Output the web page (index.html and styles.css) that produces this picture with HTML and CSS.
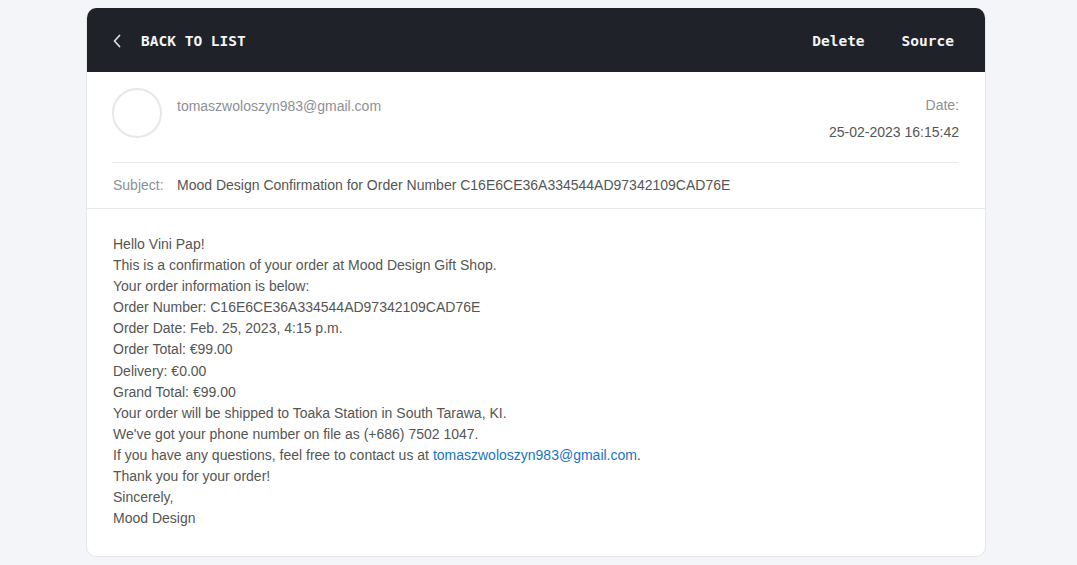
FILE: index.html
```html
<!DOCTYPE html>
<html>
<head>
<meta charset="utf-8">
<link rel="stylesheet" href="styles.css">
</head>
<body>
<div class="card">
  <div class="topbar">
    <a class="back">
      <svg class="chev" width="8" height="14" viewBox="0 0 8 14"><path d="M6.5 1.5 L1.5 7 L6.5 12.5" fill="none" stroke="#d8dade" stroke-width="1.8" stroke-linecap="round" stroke-linejoin="round"/></svg>
      <span>BACK TO LIST</span>
    </a>
    <div class="actions">
      <span>Delete</span>
      <span>Source</span>
    </div>
  </div>
  <div class="meta">
    <div class="from-row">
      <div class="avatar"></div>
      <div class="sender">tomaszwoloszyn983@gmail.com</div>
      <div class="date">
        <div class="date-label">Date:</div>
        <div class="date-value">25-02-2023 16:15:42</div>
      </div>
    </div>
    <div class="subject-row">
      <span class="subject-label">Subject:</span>
      <span class="subject-text">Mood Design Confirmation for Order Number C16E6CE36A334544AD97342109CAD76E</span>
    </div>
  </div>
  <div class="message">
    <div>Hello Vini Pap!</div>
    <div>This is a confirmation of your order at Mood Design Gift Shop.</div>
    <div>Your order information is below:</div>
    <div>Order Number: C16E6CE36A334544AD97342109CAD76E</div>
    <div>Order Date: Feb. 25, 2023, 4:15 p.m.</div>
    <div>Order Total: €99.00</div>
    <div>Delivery: €0.00</div>
    <div>Grand Total: €99.00</div>
    <div>Your order will be shipped to Toaka Station in South Tarawa, KI.</div>
    <div>We've got your phone number on file as (+686) 7502 1047.</div>
    <div>If you have any questions, feel free to contact us at <a class="link">tomaszwoloszyn983@gmail.com</a>.</div>
    <div>Thank you for your order!</div>
    <div>Sincerely,</div>
    <div>Mood Design</div>
  </div>
</div>
</body>
</html>
```

FILE: styles.css
```css
html, body {
  margin: 0;
  padding: 0;
  background: #f4f5f8;
}
body {
  padding: 8px 91px 0 86px;
  font-family: "Liberation Sans", Arial, sans-serif;
  font-size: 14px;
  color: #555;
}
.card {
  width: 900px;
  background: #fff;
  border: 1px solid #e6e7eb;
  border-top: none;
  border-radius: 10px;
  overflow: hidden;
  box-sizing: border-box;
}
.topbar {
  height: 64px;
  box-sizing: border-box;
  padding: 2px 31px 0 25px;
  background: #202229;
  display: flex;
  align-items: center;
  justify-content: space-between;
  font-family: "DejaVu Sans Mono", monospace;
  font-weight: bold;
  font-size: 14.5px;
  color: #f4f5f7;
}
.back {
  display: flex;
  align-items: center;
}
.chev {
  margin-left: 1px;
  margin-right: 20px;
  display: block;
}
.actions {
  display: flex;
  gap: 37px;
}
.meta {
  padding: 16px 26px 13px 25px;
  border-bottom: 1px solid #e8e9ec;
}
.from-row {
  display: flex;
  align-items: flex-start;
  padding-bottom: 20px;
  border-bottom: 1px solid #e8e9ec;
}
.avatar {
  width: 46px;
  height: 46px;
  border: 2px solid #e6e7eb;
  border-radius: 50%;
  flex: none;
}
.sender {
  margin-left: 15px;
  margin-top: 8px;
  line-height: 20px;
  color: #8c8f96;
  flex: 1;
}
.date {
  margin-top: 7px;
  text-align: right;
  line-height: 20px;
}
.date-label {
  color: #8c8f96;
}
.date-value {
  margin-top: 7px;
  color: #555;
}
.subject-row {
  padding-top: 12px;
  line-height: 20px;
  display: flex;
}
.subject-label {
  color: #8c8f96;
  margin-left: 1px;
  width: 64px;
}
.subject-text {
  color: #555;
}
.message {
  padding: 25px 26px 27px 26px;
  line-height: 21.1px;
  color: #555;
}
.link {
  color: #1a73c8;
  text-decoration: none;
}
```
